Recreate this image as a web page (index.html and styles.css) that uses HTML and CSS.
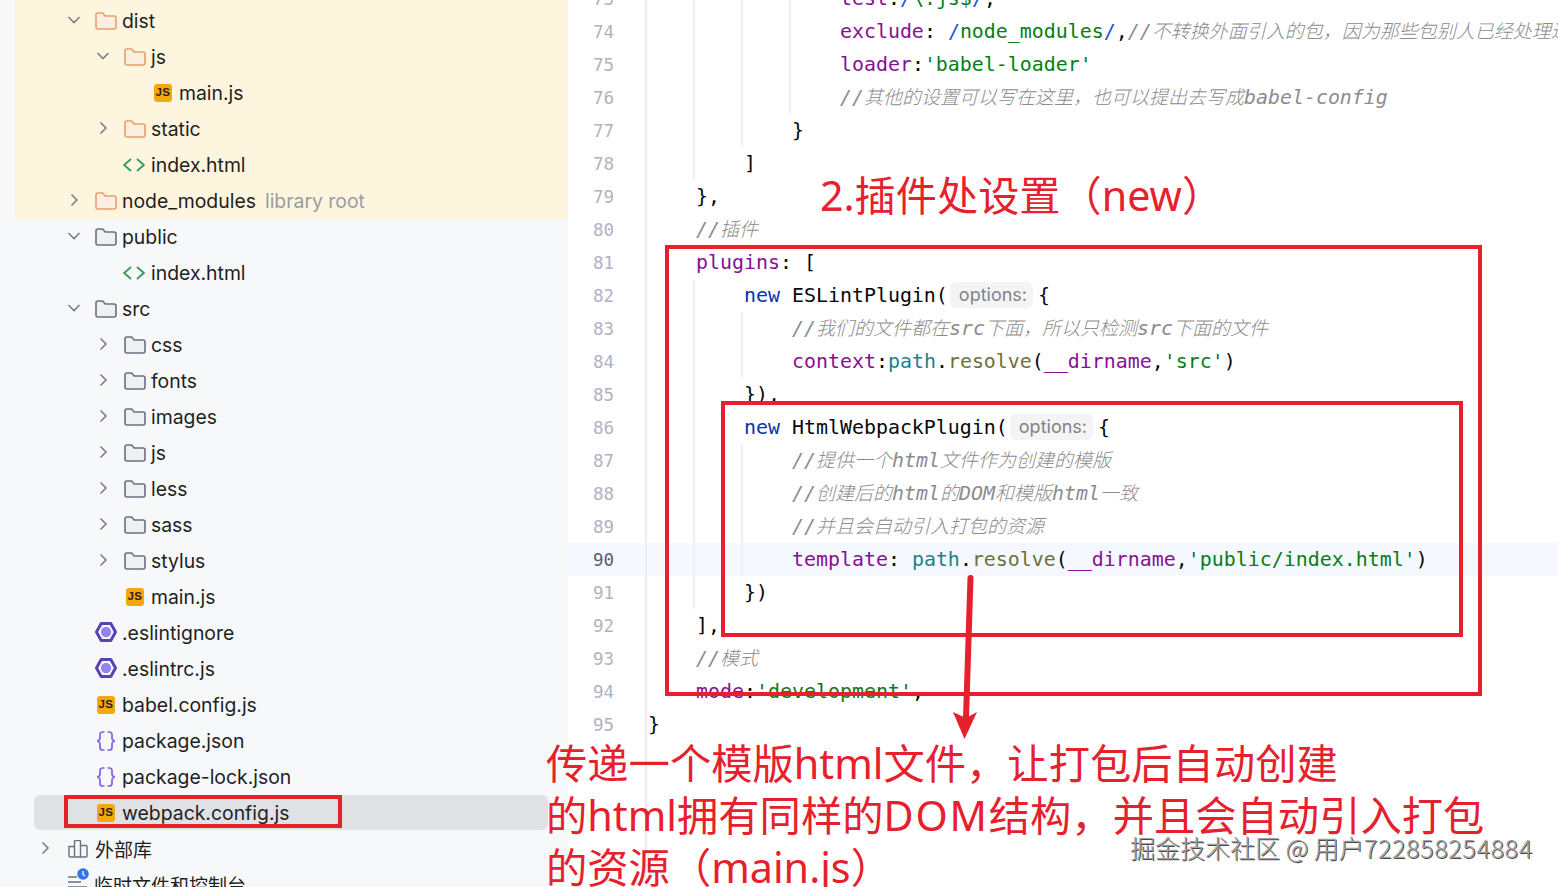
FILE: index.html
```html
<!DOCTYPE html>
<html lang="zh-CN">
<head>
<meta charset="utf-8">
<title>webpack.config.js</title>
<link rel="stylesheet" href="styles.css">
</head>
<body>
<svg class="defs" width="0" height="0">
  <symbol id="chev-d" viewBox="0 0 14 14"><path d="M1.5 4 7 9.5 12.5 4" fill="none" stroke="#7b7e8a" stroke-width="1.6"/></symbol>
  <symbol id="chev-r" viewBox="0 0 14 14"><path d="M4.5 1.5 10 7l-5.500 5.500" fill="none" stroke="#7b7e8a" stroke-width="1.600"/></symbol>
  <symbol id="folder" viewBox="0 0 22 18"><path d="M1 3a2 2 0 0 1 2-2h4.600l2.600 3H19a2 2 0 0 1 2 2v9a2 2 0 0 1-2 2H3a2 2 0 0 1-2-2z" stroke-width="1.600"/></symbol>
  <symbol id="html" viewBox="0 0 22 14"><path d="M8 1 1.200 7 8 13M14 1l6.800 6L14 13" fill="none" stroke="#3a9a5b" stroke-width="1.800"/></symbol>
  <symbol id="eslint" viewBox="0 0 22 20"><path d="M6.200 1.500h9.600L20.500 10l-4.700 8.500H6.200L1.500 10z" fill="#fff" stroke="#5742b8" stroke-width="3" stroke-linejoin="round"/><circle cx="11" cy="10" r="5.200" fill="#8f86f2"/></symbol>
  <symbol id="json" viewBox="0 0 20 20"><path d="M8.500 1H6.500A2.500 2.500 0 0 0 4 3.500V7c0 1.700-1 2.700-2.800 3C3 10.300 4 11.300 4 13v3.500A2.500 2.500 0 0 0 6.500 19h2M11.500 1h2A2.500 2.500 0 0 1 16 3.500V7c0 1.700 1 2.700 2.800 3-1.800.3-2.800 1.300-2.800 3v3.500a2.500 2.500 0 0 1-2.500 2.500h-2" fill="none" stroke="#7f62e2" stroke-width="1.700"/></symbol>
  <symbol id="lib" viewBox="0 0 20 18"><path d="M1 6.500h5.500V17H2a1 1 0 0 1-1-1zM6.500 1.500a1 1 0 0 1 1-1h4a1 1 0 0 1 1 1V17h-6zM12.500 5.500H18a1 1 0 0 1 1 1V16a1 1 0 0 1-1 1h-5.500z" fill="none" stroke="#6c707e" stroke-width="1.400"/></symbol>
  <symbol id="temp" viewBox="0 0 24 20"><path d="M1 9h9M1 14h13M1 19h19" fill="none" stroke="#6c707e" stroke-width="1.700"/><circle cx="16" cy="6" r="5.800" fill="#3574f0"/><path d="M16 3v3.500l2 1.500" fill="none" stroke="#fff" stroke-width="1.300"/></symbol>
</svg>

<div class="page">
  <aside class="sidebar">
    <div class="group-lib">
      <div class="row lv1"><svg class="chev"><use href="#chev-d"/></svg><svg class="ico folder-o"><use href="#folder"/></svg><span>dist</span></div>
      <div class="row lv2"><svg class="chev"><use href="#chev-d"/></svg><svg class="ico folder-o"><use href="#folder"/></svg><span>js</span></div>
      <div class="row lv3"><i class="chev"></i><b class="js">JS</b><span>main.js</span></div>
      <div class="row lv2"><svg class="chev"><use href="#chev-r"/></svg><svg class="ico folder-o"><use href="#folder"/></svg><span>static</span></div>
      <div class="row lv2"><i class="chev"></i><svg class="ico html"><use href="#html"/></svg><span>index.html</span></div>
      <div class="row lv1"><svg class="chev"><use href="#chev-r"/></svg><svg class="ico folder-o"><use href="#folder"/></svg><span>node_modules</span><em class="note">library root</em></div>
    </div>
    <div class="row lv1"><svg class="chev"><use href="#chev-d"/></svg><svg class="ico folder-g"><use href="#folder"/></svg><span>public</span></div>
    <div class="row lv2"><i class="chev"></i><svg class="ico html"><use href="#html"/></svg><span>index.html</span></div>
    <div class="row lv1"><svg class="chev"><use href="#chev-d"/></svg><svg class="ico folder-g"><use href="#folder"/></svg><span>src</span></div>
    <div class="row lv2"><svg class="chev"><use href="#chev-r"/></svg><svg class="ico folder-g"><use href="#folder"/></svg><span>css</span></div>
    <div class="row lv2"><svg class="chev"><use href="#chev-r"/></svg><svg class="ico folder-g"><use href="#folder"/></svg><span>fonts</span></div>
    <div class="row lv2"><svg class="chev"><use href="#chev-r"/></svg><svg class="ico folder-g"><use href="#folder"/></svg><span>images</span></div>
    <div class="row lv2"><svg class="chev"><use href="#chev-r"/></svg><svg class="ico folder-g"><use href="#folder"/></svg><span>js</span></div>
    <div class="row lv2"><svg class="chev"><use href="#chev-r"/></svg><svg class="ico folder-g"><use href="#folder"/></svg><span>less</span></div>
    <div class="row lv2"><svg class="chev"><use href="#chev-r"/></svg><svg class="ico folder-g"><use href="#folder"/></svg><span>sass</span></div>
    <div class="row lv2"><svg class="chev"><use href="#chev-r"/></svg><svg class="ico folder-g"><use href="#folder"/></svg><span>stylus</span></div>
    <div class="row lv2"><i class="chev"></i><b class="js">JS</b><span>main.js</span></div>
    <div class="row lv1"><i class="chev"></i><svg class="ico esl"><use href="#eslint"/></svg><span>.eslintignore</span></div>
    <div class="row lv1"><i class="chev"></i><svg class="ico esl"><use href="#eslint"/></svg><span>.eslintrc.js</span></div>
    <div class="row lv1"><i class="chev"></i><b class="js">JS</b><span>babel.config.js</span></div>
    <div class="row lv1"><i class="chev"></i><svg class="ico json"><use href="#json"/></svg><span>package.json</span></div>
    <div class="row lv1"><i class="chev"></i><svg class="ico json"><use href="#json"/></svg><span>package-lock.json</span></div>
    <div class="row lv1 selected"><i class="chev"></i><b class="js">JS</b><span>webpack.config.js</span></div>
    <div class="row lv0"><svg class="chev"><use href="#chev-r"/></svg><svg class="ico lib"><use href="#lib"/></svg><span class="cjk">外部库</span></div>
    <div class="row lv0"><i class="chev"></i><svg class="ico temp"><use href="#temp"/></svg><span class="cjk">临时文件和控制台</span></div>
  </aside>

  <main class="editor">
    <div class="line g123"><span class="num">73</span><code>                <s class="p">test</s>:<s class="r">/</s><s class="s">\.js$</s><s class="r">/</s>,</code></div>
    <div class="line g123"><span class="num">74</span><code>                <s class="p">exclude</s>: <s class="r">/</s><s class="s">node_modules</s><s class="r">/</s>,<s class="c">//<u>不转换外面引入的包，因为那些包别人已经处理过了</u></s></code></div>
    <div class="line g123"><span class="num">75</span><code>                <s class="p">loader</s>:<s class="s">'babel-loader'</s></code></div>
    <div class="line g123"><span class="num">76</span><code>                <s class="c">//<u>其他的设置可以写在这里，也可以提出去写成</u>babel-config</s></code></div>
    <div class="line g12"><span class="num">77</span><code>            }</code></div>
    <div class="line g1"><span class="num">78</span><code>        ]</code></div>
    <div class="line"><span class="num">79</span><code>    },</code></div>
    <div class="line"><span class="num">80</span><code>    <s class="c">//<u>插件</u></s></code></div>
    <div class="line"><span class="num">81</span><code>    <s class="p">plugins</s>: [</code></div>
    <div class="line g1"><span class="num">82</span><code>        <s class="k">new</s> ESLintPlugin(<span class="hint">options:</span>{</code></div>
    <div class="line g12"><span class="num">83</span><code>            <s class="c">//<u>我们的文件都在</u>src<u>下面，所以只检测</u>src<u>下面的文件</u></s></code></div>
    <div class="line g12"><span class="num">84</span><code>            <s class="p">context</s>:<s class="t">path</s>.<s class="f">resolve</s>(<s class="p">__dirname</s>,<s class="s">'src'</s>)</code></div>
    <div class="line g1"><span class="num">85</span><code>        }),</code></div>
    <div class="line g1"><span class="num">86</span><code>        <s class="k">new</s> HtmlWebpackPlugin(<span class="hint">options:</span>{</code></div>
    <div class="line g12"><span class="num">87</span><code>            <s class="c">//<u>提供一个</u>html<u>文件作为创建的模版</u></s></code></div>
    <div class="line g12"><span class="num">88</span><code>            <s class="c">//<u>创建后的</u>html<u>的</u>DOM<u>和模版</u>html<u>一致</u></s></code></div>
    <div class="line g12"><span class="num">89</span><code>            <s class="c">//<u>并且会自动引入打包的资源</u></s></code></div>
    <div class="line g12 current"><span class="num">90</span><code>            <s class="p">template</s>: <s class="t">path</s>.<s class="f">resolve</s>(<s class="p">__dirname</s>,<s class="s">'public/index.html'</s>)</code></div>
    <div class="line g1"><span class="num">91</span><code>        })</code></div>
    <div class="line"><span class="num">92</span><code>    ],</code></div>
    <div class="line"><span class="num">93</span><code>    <s class="c">//<u>模式</u></s></code></div>
    <div class="line"><span class="num">94</span><code>    <s class="p">mode</s>:<s class="s">'development'</s>,</code></div>
    <div class="line"><span class="num">95</span><code>}</code></div>
    <div class="line"><span class="num"></span><code></code></div>
    <div class="line"><span class="num"></span><code></code></div>
    <div class="line"><span class="num"></span><code></code></div>
    <div class="line"><span class="num"></span><code></code></div>
    <div class="line"><span class="num"></span><code></code></div>
  </main>
</div>

<div class="box box-file"></div>
<div class="box box-plugins"></div>
<div class="box box-html"></div>
<svg class="arrow" width="40" height="170" viewBox="0 0 40 170">
  <path d="M24.500 6 20 146" fill="none" stroke="#e6202c" stroke-width="6" stroke-linecap="round"/>
  <path d="M7 140 20 146 31 140 18.500 167z" fill="#e6202c"/>
</svg>
<div class="title">2.插件处设置（new）</div>
<div class="desc">传递一个模版html文件，让打包后自动创建<br>的html拥有同样的<span class="wide">DOM</span>结构，并且会自动引入打包<br>的资源（main.js）</div>
<div class="mark">掘金技术社区 @ 用户<span class="digits">722858254884</span></div>
</body>
</html>
```

FILE: styles.css
```css
* { box-sizing: border-box; }
html, body { margin: 0; height: 100%; overflow: hidden; background: #fff; }
.defs { position: absolute; }
.page { display: flex; height: 887px; overflow: hidden; }

/* project tree */
.sidebar {
  width: 568px;
  flex: none;
  height: 887px;
  overflow: hidden;
  background: #f7f8fa;
  font-family: Inter, "Noto Sans CJK SC", sans-serif;
  font-size: 19.400px;
  color: #1e1f22;
}
.group-lib {
  padding-top: 3px;
  background: linear-gradient(to right, transparent 15px, #fef5df 15px);
}
.row {
  display: flex;
  align-items: center;
  height: 36px;
  white-space: nowrap;
}
.lv0 { padding-left: 35px; }
.lv1 { padding-left: 64px; }
.lv2 { padding-left: 93px; }
.lv3 { padding-left: 121px; }
.selected {
  height: 35px;
  margin: 0 20px 1px 34px;
  padding-left: 30px;
  background: #dfe1e5;
  border-radius: 6px;
}
.chev {
  flex: none;
  display: block;
  width: 20px;
  height: 14px;
  margin: -2px 11px 0 0;
}
.ico { flex: none; display: block; width: 22px; height: 18px; margin-right: 5px; }
.lv0 .ico { margin: 0 6px 0 1px; }
.cjk { font-size: 19px; margin-top: -2px; }
.folder-o { fill: #fdeee2; stroke: #e8a06a; }
.folder-g { fill: #eff0f3; stroke: #6c707e; }
.html { height: 14px; margin-left: -1px; margin-right: 6px; }
.esl { height: 20px; margin-top: -3px; }
.json { height: 20px; }
.lv0 .lib { height: 18px; margin-top: -1px; }
.lv0 .temp { width: 24px; height: 20px; margin: -14px 3px 0 1px; }
.js {
  flex: none;
  display: flex;
  align-items: center;
  justify-content: center;
  width: 18px;
  height: 18px;
  margin: 0 7px 0 2px;
  border-radius: 3px;
  background: #f4a80e;
  color: #2b2218;
  font: 700 11.500px/1 "Liberation Sans", sans-serif;
  letter-spacing: 0.5px;
}
.note { margin-left: 9px; font-style: normal; color: #9a9ca3; }

/* code editor */
.editor {
  flex: 1;
  min-width: 0;
  margin-top: -18px;
  height: 905px;
  overflow: hidden;
  background: #fff;
}
.line {
  display: flex;
  height: 33px;
  line-height: 33px;
  background-repeat: no-repeat;
  background-size: 2px 100%, 2px 100%, 2px 100%;
}
.g1 { background-image: linear-gradient(#eff0f3, #eff0f3); background-position: 125px 0; }
.g12 {
  background-image: linear-gradient(#eff0f3, #eff0f3), linear-gradient(#eff0f3, #eff0f3);
  background-position: 125px 0, 173px 0;
}
.g123 {
  background-image: linear-gradient(#eff0f3, #eff0f3), linear-gradient(#eff0f3, #eff0f3), linear-gradient(#eff0f3, #eff0f3);
  background-position: 125px 0, 173px 0, 221px 0;
}
.current { background-color: #f5f8fe; }
.num {
  flex: none;
  width: 79px;
  padding: 1px 31px 0 0;
  border-right: 2px solid #ebecf0;
  text-align: right;
  font: 17.500px/33px "DejaVu Sans Mono", monospace;
  color: #aeb3c2;
}
.current .num { color: #5a5d6b; }
code {
  display: block;
  padding-left: 1px;
  white-space: pre;
  font: 19.930px/33px "DejaVu Sans Mono", "Noto Sans CJK SC", monospace;
  color: #080808;
}
code s { text-decoration: none; }
.p { color: #871094; }
.s { color: #067d17; }
.r { color: #1750eb; }
.k { color: #0033b3; }
.t { color: #1c808c; }
.f { color: #6f6f3c; }
.c { color: #8c8c8c; font-style: italic; }
.c u {
  text-decoration: none;
  font-family: "Noto Sans CJK SC", sans-serif;
  font-size: 19px;
  font-weight: 300;
  line-height: 1;
}
.hint {
  display: inline-block;
  height: 26px;
  margin: 0 5px 0 2px;
  padding: 0 6px 0 9px;
  border-radius: 6px;
  background: #f4f4f5;
  color: #81838a;
  font: 18px/26px Inter, sans-serif;
  vertical-align: 1px;
}

/* red annotations drawn over the screenshot */
.box { position: absolute; border: 4px solid #e6202c; }
.box-file { left: 64px; top: 795px; width: 278px; height: 33px; }
.box-plugins { left: 665px; top: 245px; width: 817px; height: 451px; }
.box-html { left: 721px; top: 401px; width: 742px; height: 236px; }
.arrow { position: absolute; left: 946px; top: 572px; }
.title, .desc {
  position: absolute;
  color: #e6202c;
  font-family: "Noto Sans", "Noto Sans CJK SC", sans-serif;
  white-space: nowrap;
}
.title { left: 820px; top: 166px; font-size: 41.200px; line-height: 58px; }
.desc { left: 546px; top: 737px; font-size: 41.300px; line-height: 52px; }
.wide { letter-spacing: 1.800px; }
.mark {
  position: absolute;
  left: 1130px;
  top: 830px;
  font: 300 25px/34px "Noto Sans CJK SC", sans-serif;
  color: #a0a0a0;
  white-space: nowrap;
  text-shadow: 1px 1px 0 #4a4a4a, -1px -1px 0 #fff;
}
.digits { letter-spacing: 0.700px; }
```
